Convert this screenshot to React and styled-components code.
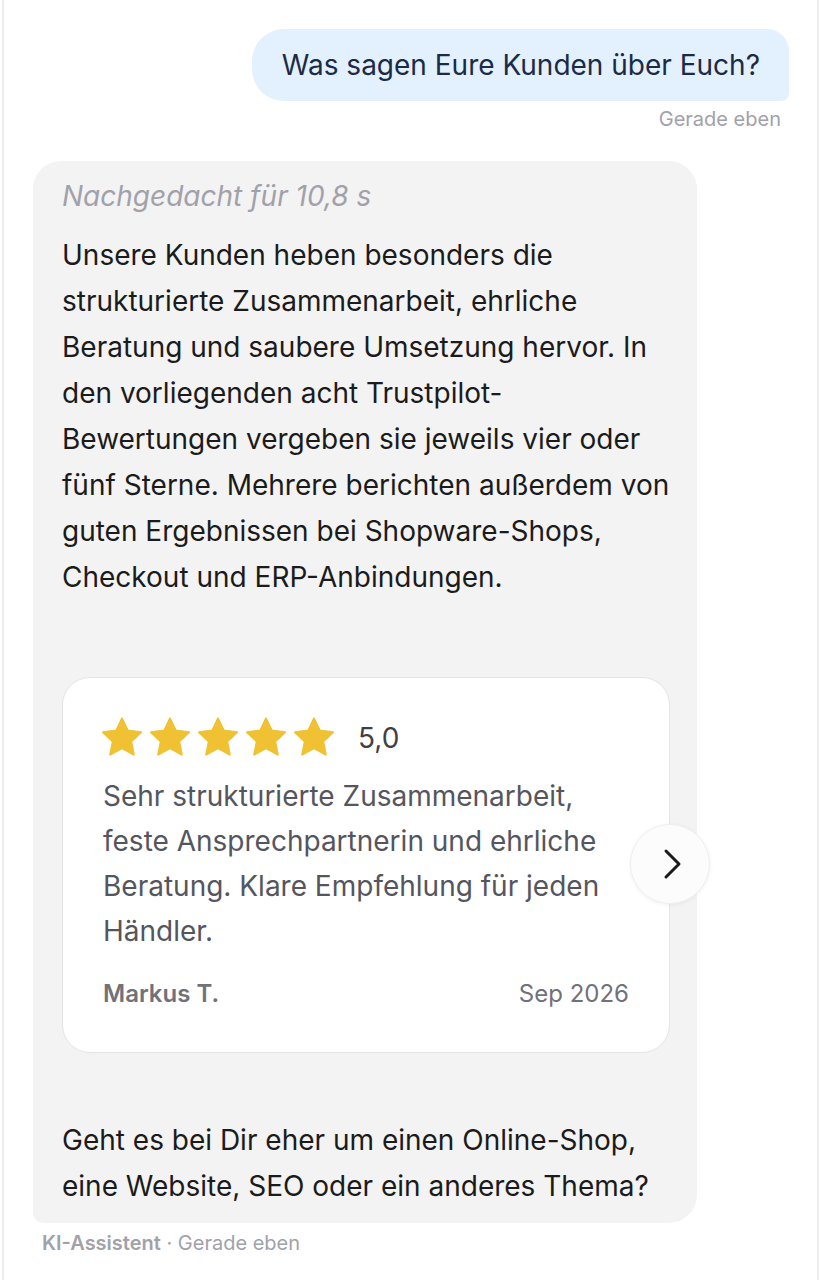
import React from "react";
import styled, { createGlobalStyle } from "styled-components";

const GlobalStyle = createGlobalStyle`
  html, body {
    margin: 0;
    padding: 0;
    background: #ffffff;
  }
  body {
    font-family: Inter, "Noto Sans", "Liberation Sans", sans-serif;
  }
`;

const review = {
  rating: "5,0",
  text: "Sehr strukturierte Zusammenarbeit, feste Ansprechpartnerin und ehrliche Beratung. Klare Empfehlung für jeden Händler.",
  author: "Markus T.",
  date: "Sep 2026",
};

const Frame = styled.div`
  margin: 0 1px 0 2px;
  min-height: 1280px;
  box-sizing: border-box;
  border-left: 2px solid #ececec;
  border-right: 2px solid #ececec;
  padding: 29px 28px 0 29px;
  display: flex;
  flex-direction: column;
`;

const UserRow = styled.div`
  display: flex;
  flex-direction: column;
  align-items: flex-end;
`;

const UserBubble = styled.div`
  background: #e3f0fd;
  color: #1c2b45;
  font-size: 28px;
  line-height: 32px;
  padding: 20px 29px 20px 30px;
  border-radius: 32px 22px 8px 32px;
`;

const Meta = styled.div`
  font-size: 20px;
  line-height: 24px;
  color: #a1a1aa;
  margin-top: ${(p) => p.$top || 6}px;
  padding-right: ${(p) => p.$right || 0}px;
  padding-left: ${(p) => p.$left || 0}px;
`;

const MetaStrong = styled.span`
  font-weight: 600;
`;

const AssistantBubble = styled.div`
  position: relative;
  margin-top: 30px;
  width: 664px;
  box-sizing: border-box;
  background: #f3f3f3;
  border-radius: 28px 28px 28px 10px;
  padding: 17px 24px 14px 29px;
`;

const Thinking = styled.div`
  font-style: italic;
  color: #a1a1aa;
  font-size: 28px;
  line-height: 36px;
  margin-bottom: 18px;
`;

const Para = styled.p`
  margin: 0;
  color: #1b1b1b;
  font-size: 28px;
  line-height: 46px;
`;

const Card = styled.div`
  margin: 77px 3px 64px 0;
  background: #ffffff;
  border: 1px solid #e4e4e4;
  border-radius: 28px;
  padding: 36px 40px 43px;
`;

const StarRow = styled.div`
  display: flex;
  align-items: center;
  margin-left: -5px;
`;

const Rating = styled.span`
  margin-left: 20px;
  font-size: 28px;
  color: #3f3f46;
`;

const ReviewText = styled.p`
  margin: 12px 0 0;
  color: #55555e;
  font-size: 28px;
  line-height: 45px;
`;

const CardFooter = styled.div`
  margin-top: 25px;
  display: flex;
  justify-content: space-between;
  font-size: 24px;
  line-height: 30px;
  color: #71717a;
`;

const Author = styled.span`
  font-weight: 600;
`;

const NextButton = styled.button`
  position: absolute;
  left: 597px;
  top: 663px;
  width: 80px;
  height: 80px;
  border-radius: 50%;
  border: 1px solid #efefef;
  background: #fcfcfc;
  box-shadow: 0 1px 4px rgba(0, 0, 0, 0.06);
  display: flex;
  align-items: center;
  justify-content: center;
  padding: 0 0 0 3px;
  color: #1a1a1a;
`;

const Star = () => (
  <svg width="48" height="48" viewBox="0 0 24 24">
    <path
      d="M12 2.2l2.9 6.1 6.6.8-4.9 4.6 1.3 6.6L12 17.1l-5.9 3.2 1.3-6.6-4.9-4.6 6.6-.8z"
      fill="#f0c132"
      stroke="#f0c132"
      strokeWidth="1"
      strokeLinejoin="round"
    />
  </svg>
);

const Chevron = () => (
  <svg width="20" height="32" viewBox="0 0 20 32" fill="none">
    <path
      d="M4 3l13 13-13 13"
      stroke="currentColor"
      strokeWidth="3"
      strokeLinecap="round"
      strokeLinejoin="round"
    />
  </svg>
);

const App = () => (
  <>
    <GlobalStyle />
    <Frame>
      <UserRow>
        <UserBubble>Was sagen Eure Kunden über Euch?</UserBubble>
        <Meta $right={8}>Gerade eben</Meta>
      </UserRow>
      <AssistantBubble>
        <Thinking>Nachgedacht für 10,8 s</Thinking>
        <Para>
          Unsere Kunden heben besonders die strukturierte Zusammenarbeit,
          ehrliche Beratung und saubere Umsetzung hervor. In den vorliegenden
          acht Trustpilot-Bewertungen vergeben sie jeweils vier oder fünf
          Sterne. Mehrere berichten außerdem von guten Ergebnissen bei
          Shopware-Shops, Checkout und ERP-Anbindungen.
        </Para>
        <Card>
          <StarRow>
            {[0, 1, 2, 3, 4].map((i) => (
              <Star key={i} />
            ))}
            <Rating>{review.rating}</Rating>
          </StarRow>
          <ReviewText>{review.text}</ReviewText>
          <CardFooter>
            <Author>{review.author}</Author>
            <span>{review.date}</span>
          </CardFooter>
        </Card>
        <NextButton aria-label="Weiter">
          <Chevron />
        </NextButton>
        <Para>
          Geht es bei Dir eher um einen Online-Shop, eine Website, SEO oder ein
          anderes Thema?
        </Para>
      </AssistantBubble>
      <Meta $left={9} $top={8}>
        <MetaStrong>KI-Assistent</MetaStrong> · Gerade eben
      </Meta>
    </Frame>
  </>
);

export default App;
